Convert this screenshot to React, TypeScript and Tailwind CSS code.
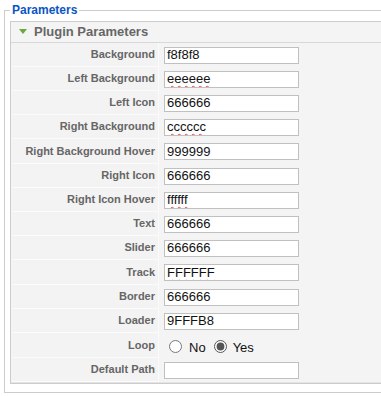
import { useState } from 'react';

const rows: { label: string; value: string; wavy?: boolean }[] = [
  { label: 'Background', value: 'f8f8f8' },
  { label: 'Left Background', value: 'eeeeee', wavy: true },
  { label: 'Left Icon', value: '666666' },
  { label: 'Right Background', value: 'cccccc', wavy: true },
  { label: 'Right Background Hover', value: '999999' },
  { label: 'Right Icon', value: '666666' },
  { label: 'Right Icon Hover', value: 'ffffff', wavy: true },
  { label: 'Text', value: '666666' },
  { label: 'Slider', value: '666666' },
  { label: 'Track', value: 'FFFFFF', wavy: true },
  { label: 'Border', value: '666666' },
  { label: 'Loader', value: '9FFFB8' },
];

function Label({ children }: { children: string }) {
  return (
    <div className="w-[147px] shrink-0 flex items-center justify-end pr-[3px] bg-[#f3f3f3] border-r border-b border-[#fbfbfb] text-[11px] font-bold text-[#666]">
      {children}
    </div>
  );
}

function TextField({ value, wavy }: { value: string; wavy?: boolean }) {
  return (
    <input
      type="text"
      defaultValue={value}
      spellCheck={false}
      className={
        'w-[135px] h-[17px] bg-white border border-[#c0c0c0] px-[2px] text-[13px] text-[#111] outline-none ' +
        (wavy ? 'underline decoration-wavy decoration-[#e44] decoration-1 underline-offset-2' : '')
      }
    />
  );
}

export default function App() {
  const [loop, setLoop] = useState('yes');

  return (
    <div className="w-[381px] h-[396px] overflow-hidden bg-white" style={{ fontFamily: '"Liberation Sans", Arial, sans-serif' }}>
      <fieldset className="mt-[2px] ml-[4px] border border-r-0 border-[#ccc] pl-[5px] pt-[3px] pb-[8px]">
        <legend className="px-[2px] text-[12px] leading-[16px] font-bold text-[#0b55c4]">Parameters</legend>

        <div className="border border-r-0 border-[#ccc] bg-[#f4f4f4]">
          <div className="h-[21px] flex items-center border-b border-[#d8d8d8] pl-[8px] gap-[7px]">
            <svg width="8" height="6" viewBox="0 0 8 6">
              <path d="M0 0 L8 0 L4 5 Z" fill="#6da83c" />
            </svg>
            <span className="text-[13px] font-bold text-[#666]">Plugin Parameters</span>
          </div>

          <div className="pl-[1px] border-b border-[#e4e4e4]">
            {rows.map((r, i) => (
              <div key={r.label} className={'flex gap-[2px] ' + (i === 4 || i === 9 ? 'h-[25px]' : 'h-[24px]')}>
                <Label>{r.label}</Label>
                <div className="flex items-center pl-[3px]">
                  <TextField value={r.value} wavy={r.wavy} />
                </div>
              </div>
            ))}

            <div className="flex h-[25px] gap-[2px]">
              <Label>Loop</Label>
              <div className="flex items-center pl-[8px] pt-[2px] text-[13px] text-[#111]">
                <label className="flex items-center">
                  <input
                    type="radio"
                    name="loop"
                    checked={loop === 'no'}
                    onChange={() => setLoop('no')}
                    className="m-0 w-[13px] h-[13px] accent-[#555]"
                  />
                  <span className="ml-[7px] mt-[3px]">No</span>
                </label>
                <label className="flex items-center ml-[8px]">
                  <input
                    type="radio"
                    name="loop"
                    checked={loop === 'yes'}
                    onChange={() => setLoop('yes')}
                    className="m-0 w-[13px] h-[13px] accent-[#555]"
                  />
                  <span className="ml-[6px] mt-[3px]">Yes</span>
                </label>
              </div>
            </div>

            <div className="flex h-[24px] gap-[2px]">
              <Label>Default Path</Label>
              <div className="flex items-center pl-[3px]">
                <TextField value="" />
              </div>
            </div>
          </div>
        </div>
      </fieldset>
    </div>
  );
}
